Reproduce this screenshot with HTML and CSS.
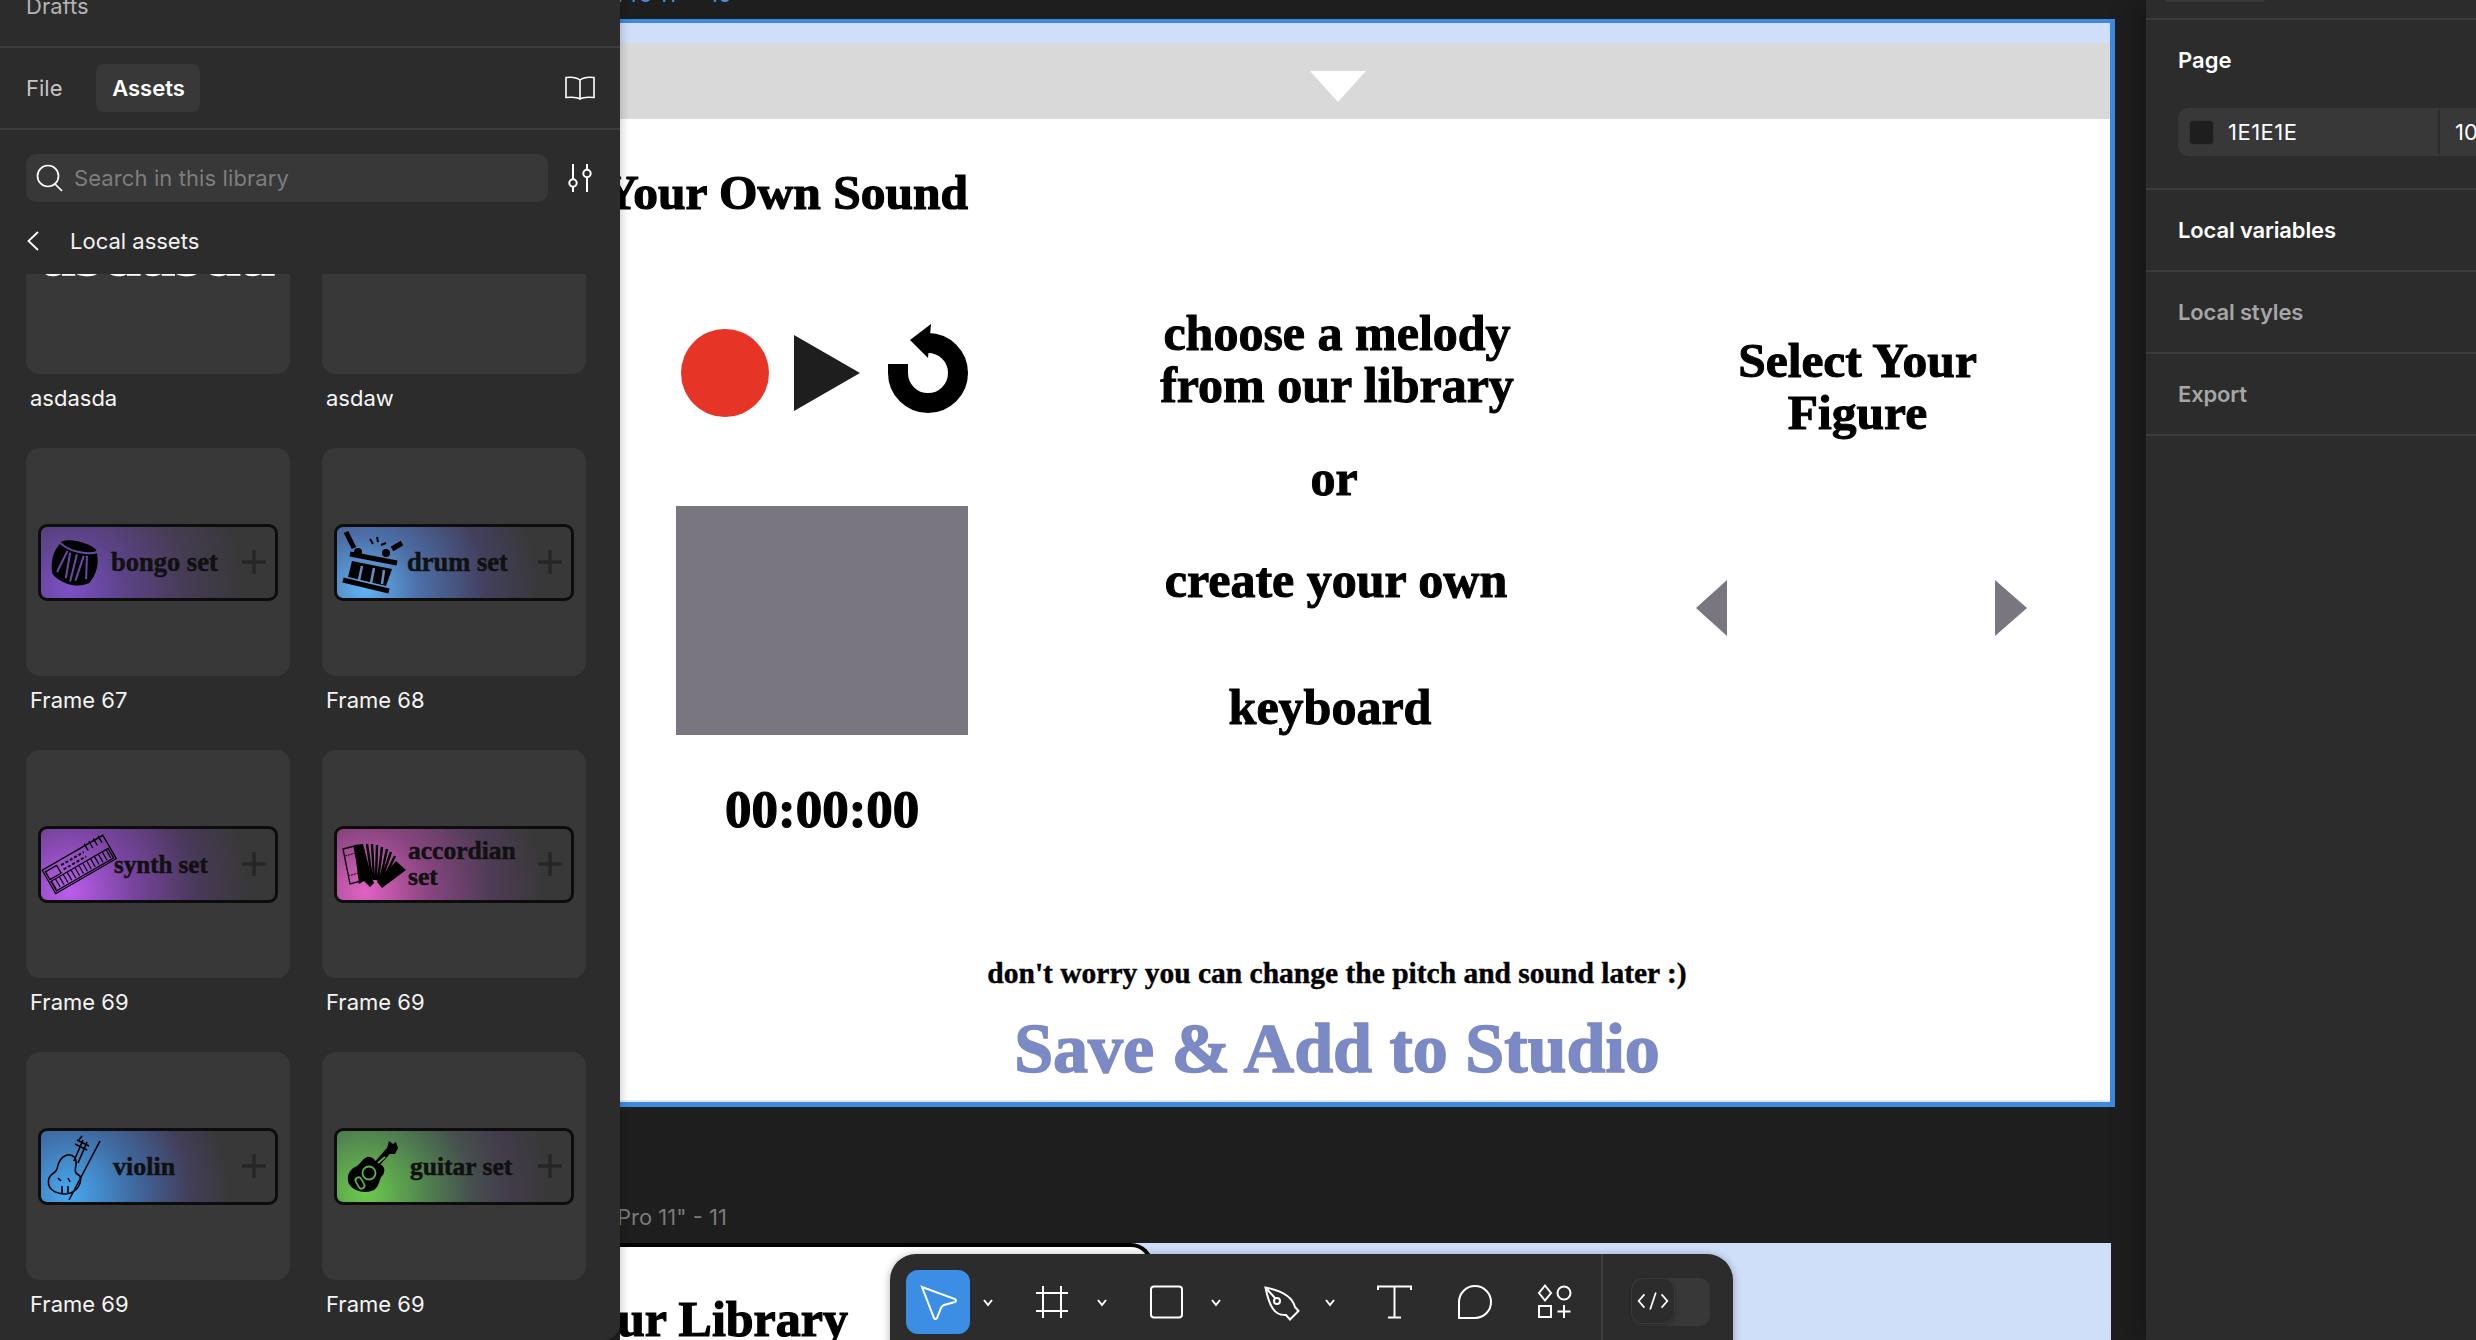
FILE: index.html
```html
<!DOCTYPE html>
<html lang="en">
<head>
<meta charset="utf-8">
<title>Figma assets</title>
<link rel="stylesheet" href="styles.css">
</head>
<body>
<div class="app">
  <aside class="left">
    <div class="drafts"><span>Drafts</span></div>
    <div class="tabs">
      <span class="tab">File</span>
      <span class="tab active">Assets</span>
      <svg class="book" viewBox="0 0 30 24"><path d="M15 4C12 1.5 6 1 1 1.5V21.5C6 21 12 21 15 23C18 21 24 21 29 21.500V1.500C24 1 18 1.500 15 4V23"/></svg>
    </div>
    <div class="searchrow">
      <div class="search">
        <svg class="sicon" viewBox="0 0 26 26"><circle cx="12" cy="11" r="10.500"/><path d="M19 19L26 26"/></svg>
        <span>Search in this library</span>
      </div>
      <svg class="filter" viewBox="0 0 24 28"><path d="M5 0V15M5 23V28M19 0V5M19 14V28"/><circle cx="5" cy="19" r="3.700"/><circle cx="19" cy="9.500" r="3.700"/></svg>
    </div>
    <div class="crumb">
      <svg class="back" viewBox="0 0 12 20"><path d="M11 1L1.500 10L11 19"/></svg>
      <span>Local assets</span>
    </div>
    <div class="list">
      <div class="grid">
        <div class="item">
          <div class="card big"><span class="bigtext">asdasda</span></div>
          <div class="name">asdasda</div>
        </div>
        <div class="item">
          <div class="card"></div>
          <div class="name">asdaw</div>
        </div>

        <div class="item">
          <div class="card"><div class="preset bongo">
            <svg class="ico" viewBox="0 0 73 76"><g transform="rotate(14 37 38)"><path class="k" d="M18 24C13 34 13 44 18 55C30 63 46 63 56 55C61 44 61 34 56 24C56 15 18 15 18 24Z"/><path class="c1" d="M18 23C28 29 46 29 56 23M27 29L22 52M37 30V58M47 29L52 52M30 30L32 56M44 30L42 56"/></g></svg>
            <span class="label">bongo set</span>
            <svg class="plus" viewBox="0 0 24 24"><path d="M12 0V24M0 12H24"/></svg>
          </div></div>
          <div class="name">Frame 67</div>
        </div>
        <div class="item">
          <div class="card"><div class="preset drum">
            <svg class="ico" viewBox="0 0 73 76"><g class="kl"><path d="M12 8L20 24"/><path d="M68 19L58 25"/><path class="thin" d="M36 15L39 20M43 13L44 18M47 21L52 19"/><path d="M16 30L63 39"/><path d="M9 56L55 67"/></g><circle class="k" cx="24" cy="28" r="4"/><circle class="k" cx="52" cy="29" r="4"/><path class="k" d="M18 37L58 45L52 62L14 53Z"/><path class="c2" d="M28 42L25 56M40 44L37 59M50 46L48 60"/></svg>
            <span class="label">drum set</span>
            <svg class="plus" viewBox="0 0 24 24"><path d="M12 0V24M0 12H24"/></svg>
          </div></div>
          <div class="name">Frame 68</div>
        </div>

        <div class="item">
          <div class="card"><div class="preset synth">
            <svg class="ico" viewBox="0 0 73 76"><g transform="translate(41 38) rotate(-30)"><rect class="o" x="-35" y="-13" width="70" height="27"/><rect class="o" x="-33" y="1" width="66" height="11"/><path class="tick" d="M-33 6H33"/><rect class="o" x="-33" y="-10" width="13" height="9"/><path class="knob" d="M-16 -8H10M-16 -3H10"/><path class="slide" d="M14 -11H33"/></g></svg>
            <span class="label s3">synth set</span>
            <svg class="plus" viewBox="0 0 24 24"><path d="M12 0V24M0 12H24"/></svg>
          </div></div>
          <div class="name">Frame 69</div>
        </div>
        <div class="item">
          <div class="card"><div class="preset accordion">
            <svg class="ico" viewBox="0 0 73 76"><path class="o" d="M9 23L20 20L27 55L16 58Z"/><path class="tick2" d="M11 30L22 27M14 50L25 47"/><path class="k" d="M20 19L29 18L38 52L40 57L36 61L30 55L25 58Z"/><path class="k" d="M62 35L72 44L48 62L43 56Z"/><path class="fan" d="M38 53L33 18M40 54L38 18M42 54L43 19M44 55L48 21M46 55L53 23M47 55L57 26M48 56L61 30"/></svg>
            <span class="label two">accordian set</span>
            <svg class="plus" viewBox="0 0 24 24"><path d="M12 0V24M0 12H24"/></svg>
          </div></div>
          <div class="name">Frame 69</div>
        </div>

        <div class="item">
          <div class="card"><div class="preset violin">
            <svg class="ico" viewBox="0 0 73 76"><path class="o2" d="M62 13L31 72"/><path class="o2" d="M45 12L36 33M49 14L40 35M39 12L51 18M37 16L49 22M44 8L41 12"/><path class="o2" d="M29 27C36 26 39 31 38 37C37 42 36 45 42 48C44 54 40 65 28 66C16 66 8 60 11 50C13 45 18 45 19 41C20 35 22 29 29 27Z"/><path class="o2" d="M20 50L23 53M30 50L32 54M24 58V66M30 58V66"/></svg>
            <span class="label v2">violin</span>
            <svg class="plus" viewBox="0 0 24 24"><path d="M12 0V24M0 12H24"/></svg>
          </div></div>
          <div class="name">Frame 69</div>
        </div>
        <div class="item">
          <div class="card"><div class="preset guitar">
            <svg class="ico" viewBox="0 0 73 76"><path class="k" d="M33 29C39 28 41 33 44 36C50 36 52 42 49 47C45 50 46 58 40 62C32 66 20 64 15 56C12 49 15 42 21 39C25 38 28 31 33 29Z"/><path class="neck" d="M36 44L56 21"/><path class="k" d="M53 20L55 13L59 16L62 14L64 20L61 26L56 26Z"/><circle class="ring" cx="35" cy="45" r="6.500"/><rect class="ring" x="-3" y="-6" width="6" height="12" rx="3" transform="translate(26 55) rotate(-30)"/><path class="ring" d="M44 35L51 29"/></svg>
            <span class="label g3">guitar set</span>
            <svg class="plus" viewBox="0 0 24 24"><path d="M12 0V24M0 12H24"/></svg>
          </div></div>
          <div class="name">Frame 69</div>
        </div>
      </div>
    </div>
  </aside>

  <main class="canvas">
    <div class="flabel flabel1">Pro 11" - 10</div>
    <section class="frame">
      <div class="band"></div>
      <div class="grey"><span class="drop"></span></div>
      <div class="stage">
        <h1 class="t heading">Your Own Sound</h1>
        <svg class="controls" viewBox="0 0 300 110"><circle class="rec" cx="49" cy="53" r="44"/><path class="play" d="M118 15L184 53L118 91Z"/><path class="redo" d="M222 44V53A30 30 0 1 0 252 23"/><path class="redohead" d="M255 4L234 20L252 38Z"/></svg>
        <div class="square"></div>
        <div class="t time">00:00:00</div>
        <div class="t mid melody">choose a melody<br>from our library</div>
        <div class="t mid or">or</div>
        <div class="t mid create">create your own</div>
        <div class="t mid keyboard">keyboard</div>
        <div class="t figure">Select Your<br>Figure</div>
        <span class="arrow aleft"></span>
        <span class="arrow aright"></span>
        <div class="t worry">don't worry you can change the pitch and sound later :)</div>
        <div class="t save">Save &amp; Add to Studio</div>
      </div>
    </section>
    <div class="flabel flabel2">Pro 11" - 11</div>
    <section class="frame2">
      <div class="libcard"><span class="libtitle">Our Library</span></div>
    </section>

    <nav class="toolbar">
      <div class="tool sel"><svg viewBox="0 0 64 64"><path d="M16 17L49 29Q51 31 49 32L38 35Q36 36 35 38L31 48Q29 50 28 48Z"/></svg></div>
      <svg class="caret" viewBox="0 0 36 64"><path d="M14 30L18 35L22 30"/></svg>
      <div class="tool gap"><svg viewBox="0 0 64 64"><path d="M23 16V48M41 16V48M16 23H48M16 41H48"/></svg></div>
      <svg class="caret" viewBox="0 0 36 64"><path d="M14 30L18 35L22 30"/></svg>
      <div class="tool gap"><svg viewBox="0 0 64 64"><rect x="17" y="16.500" width="31" height="31" rx="3"/></svg></div>
      <svg class="caret" viewBox="0 0 36 64"><path d="M14 30L18 35L22 30"/></svg>
      <div class="tool gapw"><svg viewBox="0 0 64 64"><path d="M15.500 17.500C28 20 42 25 45 37L48.500 41L40 49.500L36 45C24 46 19 35 15.500 17.500ZM15.500 17.500L25 28"/><circle cx="27" cy="31" r="3"/></svg></div>
      <svg class="caret tight" viewBox="0 0 36 64"><path d="M14 30L18 35L22 30"/></svg>
      <div class="tool gap"><svg viewBox="0 0 64 64"><path d="M16 20V16.500H49V20M32.500 16.500V47.500M26 47.500H39"/></svg></div>
      <div class="tool gapw"><svg viewBox="0 0 64 64"><path d="M17 48V32A16 16 0 1 1 33 48Z"/></svg></div>
      <div class="tool gapw"><svg viewBox="0 0 64 64"><path d="M23 15.500L29 23L23 30.500L17 23ZM17 36H29V47H17ZM42 35V48M35.500 41.500H48.500"/><circle cx="42" cy="23" r="6.500"/></svg></div>
      <span class="tdiv"></span>
      <div class="codewrap"><div class="code"><svg viewBox="0 0 44 44"><path d="M13 15L7 22L13 29M31 15L37 22L31 29M25 13L19 31"/></svg></div></div>
    </nav>
  </main>

  <aside class="right">
    <div class="topbar"><span class="toppill"></span></div>
    <div class="rsec page">
      <div class="rtitle">Page</div>
      <div class="field">
        <span class="swatch"></span>
        <span class="hex">1E1E1E</span>
        <span class="fdiv"></span>
        <span class="pct">100%</span>
      </div>
    </div>
    <div class="rrow">Local variables</div>
    <div class="rrow dim">Local styles</div>
    <div class="rrow dim">Export</div>
  </aside>
</div>
</body>
</html>
```
FILE: styles.css
```css
* { box-sizing: border-box; }
html, body { margin: 0; height: 100%; overflow: hidden; background: #1e1e1e; }
body { font-family: Inter, "Liberation Sans", sans-serif; font-size: 22px; color: #fff; }
.app { display: flex; width: 2476px; height: 1340px; overflow: hidden; }

/* left panel */
.left { width: 620px; flex: none; height: 1340px; background: #2c2c2c; display: flex; flex-direction: column; position: relative; z-index: 3; border-bottom-right-radius: 16px; box-shadow: 2px 0 8px rgba(0,0,0,.18); overflow: hidden; }
.drafts { height: 48px; flex: none; border-bottom: 2px solid #3d3d3d; color: #b3b3b3; line-height: 26px; padding-left: 26px; margin-top: 0; display: flex; align-items: flex-start; }
.drafts span { margin-top: -7px; }
.tabs { height: 82px; flex: none; border-bottom: 2px solid #3d3d3d; display: flex; align-items: center; padding-left: 26px; }
.tab { color: #c4c4c4; font-weight: 400; }
.tab.active { margin-left: 34px; width: 104px; height: 48px; border-radius: 8px; background: #383838; color: #fff; font-weight: 600; display: flex; align-items: center; justify-content: center; }
.book { width: 30px; height: 24px; margin-left: auto; margin-right: 25px; fill: none; stroke: #fff; stroke-width: 1.6; }
.searchrow { display: flex; align-items: center; padding: 24px 0 0 26px; flex: none; }
.search { width: 522px; height: 48px; background: #383838; border-radius: 10px; display: flex; align-items: center; padding-left: 10px; color: #7d7d7d; letter-spacing: .1px; }
.sicon { width: 26px; height: 26px; overflow: visible; fill: none; stroke: #fff; stroke-width: 1.7; margin-right: 12px; }
.filter { width: 24px; height: 28px; margin-left: 20px; fill: none; stroke: #fff; stroke-width: 2; }
.crumb { display: flex; align-items: center; height: 72px; flex: none; padding: 6px 0 0 27px; color: #f2f2f2; }
.back { width: 12px; height: 20px; fill: none; stroke: #fff; stroke-width: 1.8; margin-right: 31px; }
.list { flex: 1; overflow: hidden; }
.grid { display: grid; grid-template-columns: 264px 264px; column-gap: 32px; row-gap: 0; padding-left: 26px; margin-top: -128px; }
.item { height: 302px; }
.card { height: 228px; background: #383838; border-radius: 14px; display: flex; align-items: center; justify-content: center; overflow: hidden; }
.big { align-items: flex-start; }
.bigtext { margin-top: 74px; font-family: "Liberation Serif", serif; font-weight: 700; font-size: 69px; line-height: 64px; color: #fff; -webkit-text-stroke: 1.500px #fff; }
.name { margin: 11px 0 0 4px; line-height: 26px; color: #f4f4f4; }

.preset { width: 240px; height: 77px; border: 3px solid #0d0d0d; border-radius: 9px; display: flex; align-items: center; background-color: #383838; }
.bongo { background-image: radial-gradient(circle 230px at 12% 88%, #7d50c6 0%, #5c4388 24%, #453c52 52%, #383838 76%); }
.drum { background-image: radial-gradient(circle 230px at 12% 88%, #61b4f4 0%, #4c6ea6 24%, #43405f 52%, #383838 76%); }
.synth { background-image: radial-gradient(circle 230px at 12% 88%, #bb5ded 0%, #77449e 28%, #49395a 55%, #383838 78%); }
.accordion { background-image: radial-gradient(circle 230px at 12% 88%, #e162c4 0%, #87457f 28%, #4e3c55 55%, #383838 78%); }
.violin { background-image: radial-gradient(circle 230px at 12% 88%, #47a9f0 0%, #3f6aa2 28%, #433f5c 52%, #383838 70%); }
.guitar { background-image: radial-gradient(circle 230px at 12% 88%, #6dcb4c 0%, #4f7f50 28%, #46504e 46%, #433c4c 62%, #383838 80%); }
.ico { width: 73px; height: 76px; margin-left: -3px; flex: none; overflow: visible; }
.label { font-family: "Liberation Serif", serif; font-weight: 700; font-size: 26.500px; line-height: 27px; color: #111; -webkit-text-stroke: .5px #111; white-space: nowrap; }
.s3 { margin-left: 3px; font-size: 25px; }
.two { width: 120px; white-space: normal; font-size: 25.500px; line-height: 26px; margin-left: 1px; }
.v2 { margin-left: 2px; font-size: 26px; }
.g3 { margin-left: 3px; font-size: 25.500px; }
.plus { width: 24px; height: 24px; margin-left: auto; margin-right: 9px; fill: none; stroke: #262626; stroke-width: 3.500; flex: none; }
.k { fill: #000; }
.kl path { stroke: #000; stroke-width: 5; fill: none; }
.kl .thin { stroke-width: 2; }
.c1 { fill: none; stroke: #6a49a8; stroke-width: 2; }
.c2 { fill: none; stroke: #6190c8; stroke-width: 2.500; }
.o { fill: none; stroke: #000; stroke-width: 1.300; }
.o2 { fill: none; stroke: #000; stroke-width: 1.600; }
.tick { fill: none; stroke: #000; stroke-width: 9; stroke-dasharray: 1.300 3.200; }
.tick2 { fill: none; stroke: #000; stroke-width: 1; stroke-dasharray: 2 1; }
.knob { fill: none; stroke: #000; stroke-width: 2; stroke-dasharray: 3 2; }
.slide { fill: none; stroke: #000; stroke-width: 8; stroke-dasharray: 1.300 4; }
.fan { fill: none; stroke: #000; stroke-width: 2.400; }
.neck { fill: none; stroke: #000; stroke-width: 6; }
.ring { fill: none; stroke: #5fae52; stroke-width: 1.800; }

/* canvas */
.canvas { flex: 1; position: relative; overflow: hidden; background: #1e1e1e; }
.flabel { position: absolute; left: -3px; font-size: 22px; line-height: 26px; white-space: nowrap; }
.flabel1 { top: -19px; color: #4a90e2; }
.flabel2 { top: 1204px; color: #7a7a7a; }
.frame { position: absolute; left: 0; top: 19px; width: 1495px; height: 1088px; border: solid #3d8ae0; border-width: 4px 5px 5px 0; display: flex; flex-direction: column; background: #fff; box-shadow: inset 0 -2px 0 #dfe8f7; }
.band { height: 20px; background: #cfdffa; flex: none; }
.grey { height: 76px; background: #d9d9d9; flex: none; display: flex; justify-content: flex-start; padding: 28px 0 0 690px; }
.drop { width: 0; height: 0; border-left: 28px solid transparent; border-right: 28px solid transparent; border-top: 31px solid #fff; }
.stage { flex: 1; position: relative; overflow: hidden; margin-bottom: 2px; }
.t { position: absolute; margin: 0; font-family: "Liberation Serif", serif; font-weight: 700; color: #000; white-space: nowrap; -webkit-text-stroke: 1px #000; }
.heading { right: 1142px; top: 49px; font-size: 49.500px; line-height: 50px; -webkit-text-stroke: 1.200px #000; }
.controls { position: absolute; left: 56px; top: 201px; width: 300px; height: 110px; overflow: visible; }
.rec { fill: #e63526; }
.play { fill: #1e1e1e; }
.redo { fill: none; stroke: #000; stroke-width: 20; }
.redohead { fill: #000; }
.square { position: absolute; left: 56px; top: 387px; width: 292px; height: 229px; background: #79767f; }
.time { left: 105px; top: 667px; width: 194px; text-align: center; font-size: 53px; line-height: 46px; -webkit-text-stroke: 1.200px #000; }
.mid { left: 417px; width: 600px; text-align: center; font-size: 50px; line-height: 52px; }
.melody { top: 188px; }
.or { top: 333px; left: 414px; }
.create { top: 435px; left: 416px; }
.keyboard { top: 562px; left: 410px; }
.figure { left: 1000px; width: 475px; top: 216px; text-align: center; font-size: 49.500px; line-height: 52px; }
.arrow { position: absolute; width: 0; height: 0; border-top: 28px solid transparent; border-bottom: 28px solid transparent; top: 461px; }
.aleft { left: 1076px; border-right: 31px solid #79767f; }
.aright { left: 1375px; border-left: 32px solid #79767f; }
.worry { left: 317px; width: 800px; text-align: center; top: 839px; font-size: 29.500px; line-height: 30px; -webkit-text-stroke: .4px #000; }
.save { left: 217px; width: 1000px; text-align: center; top: 889px; font-size: 70px; line-height: 82px; color: #7b89c4; -webkit-text-stroke: 1.500px #7b89c4; }

.frame2 { position: absolute; left: 0; top: 1243px; width: 1491px; height: 97px; background: #cfdffa; }
.libcard { width: 533px; height: 97px; background: #fff; border-top: 4px solid #000; border-right: 4px solid #000; border-top-right-radius: 22px; overflow: hidden; position: relative; }
.libtitle { position: absolute; right: 301px; top: 47px; font-family: "Liberation Serif", serif; font-weight: 700; font-size: 50px; line-height: 50px; color: #000; white-space: nowrap; -webkit-text-stroke: 1.200px #000; }

.toolbar { position: absolute; left: 270px; top: 1254px; width: 843px; height: 120px; background: #2c2c2c; border-radius: 26px; box-shadow: 0 1px 8px rgba(0,0,0,.3); display: flex; align-items: flex-start; padding: 16px 0 0 16px; }
.tool { width: 64px; height: 64px; flex: none; border-radius: 12px; }
.tool svg { width: 64px; height: 64px; fill: none; stroke: #fff; stroke-width: 2; display: block; }
.sel { background: #3b8ee4; }
.gap { margin-left: 14px; }
.gapw { margin-left: 16px; }
.caret { width: 36px; height: 64px; flex: none; fill: none; stroke: #fff; stroke-width: 2; }
.tight { margin-left: -2px; }
.tdiv { width: 2px; height: 120px; margin: -16px 0 0 15px; background: #3d3d3d; flex: none; }
.codewrap { width: 79px; height: 48px; margin: 8px 0 0 28px; background: #383838; border-radius: 10px; flex: none; }
.code { width: 44px; height: 46px; background: #2c2c2c; border: 1px solid #3a3a3a; border-radius: 12px; box-shadow: 0 1px 3px rgba(0,0,0,.3); }
.code svg { width: 42px; height: 44px; fill: none; stroke: #fff; stroke-width: 1.800; display: block; }

/* right panel */
.right { width: 330px; flex: none; height: 1340px; background: #2c2c2c; position: relative; z-index: 3; box-shadow: -12px 0 24px rgba(0,0,0,.22); overflow: hidden; }
.topbar { height: 20px; border-bottom: 2px solid #3d3d3d; }
.toppill { display: block; width: 100px; height: 2px; margin-left: 19px; background: #383838; border-radius: 0 0 8px 8px; }
.rsec { height: 170px; border-bottom: 2px solid #3d3d3d; padding: 26px 0 0 32px; }
.rtitle { font-weight: 600; line-height: 28px; }
.field { display: flex; align-items: center; height: 48px; width: 340px; margin-top: 34px; background: #383838; border-radius: 10px; padding-left: 11px; }
.swatch { width: 25px; height: 25px; background: #1e1e1e; border: 1px solid #333; border-radius: 4px; flex: none; }
.hex { margin-left: 14px; width: 210px; letter-spacing: .5px; }
.fdiv { width: 2px; height: 46px; background: #2c2c2c; }
.pct { margin-left: 15px; }
.rrow { height: 82px; padding-left: 32px; display: flex; align-items: center; font-weight: 600; border-bottom: 2px solid #3d3d3d; letter-spacing: -.15px; }
.dim { color: #a6a6a6; }
```
